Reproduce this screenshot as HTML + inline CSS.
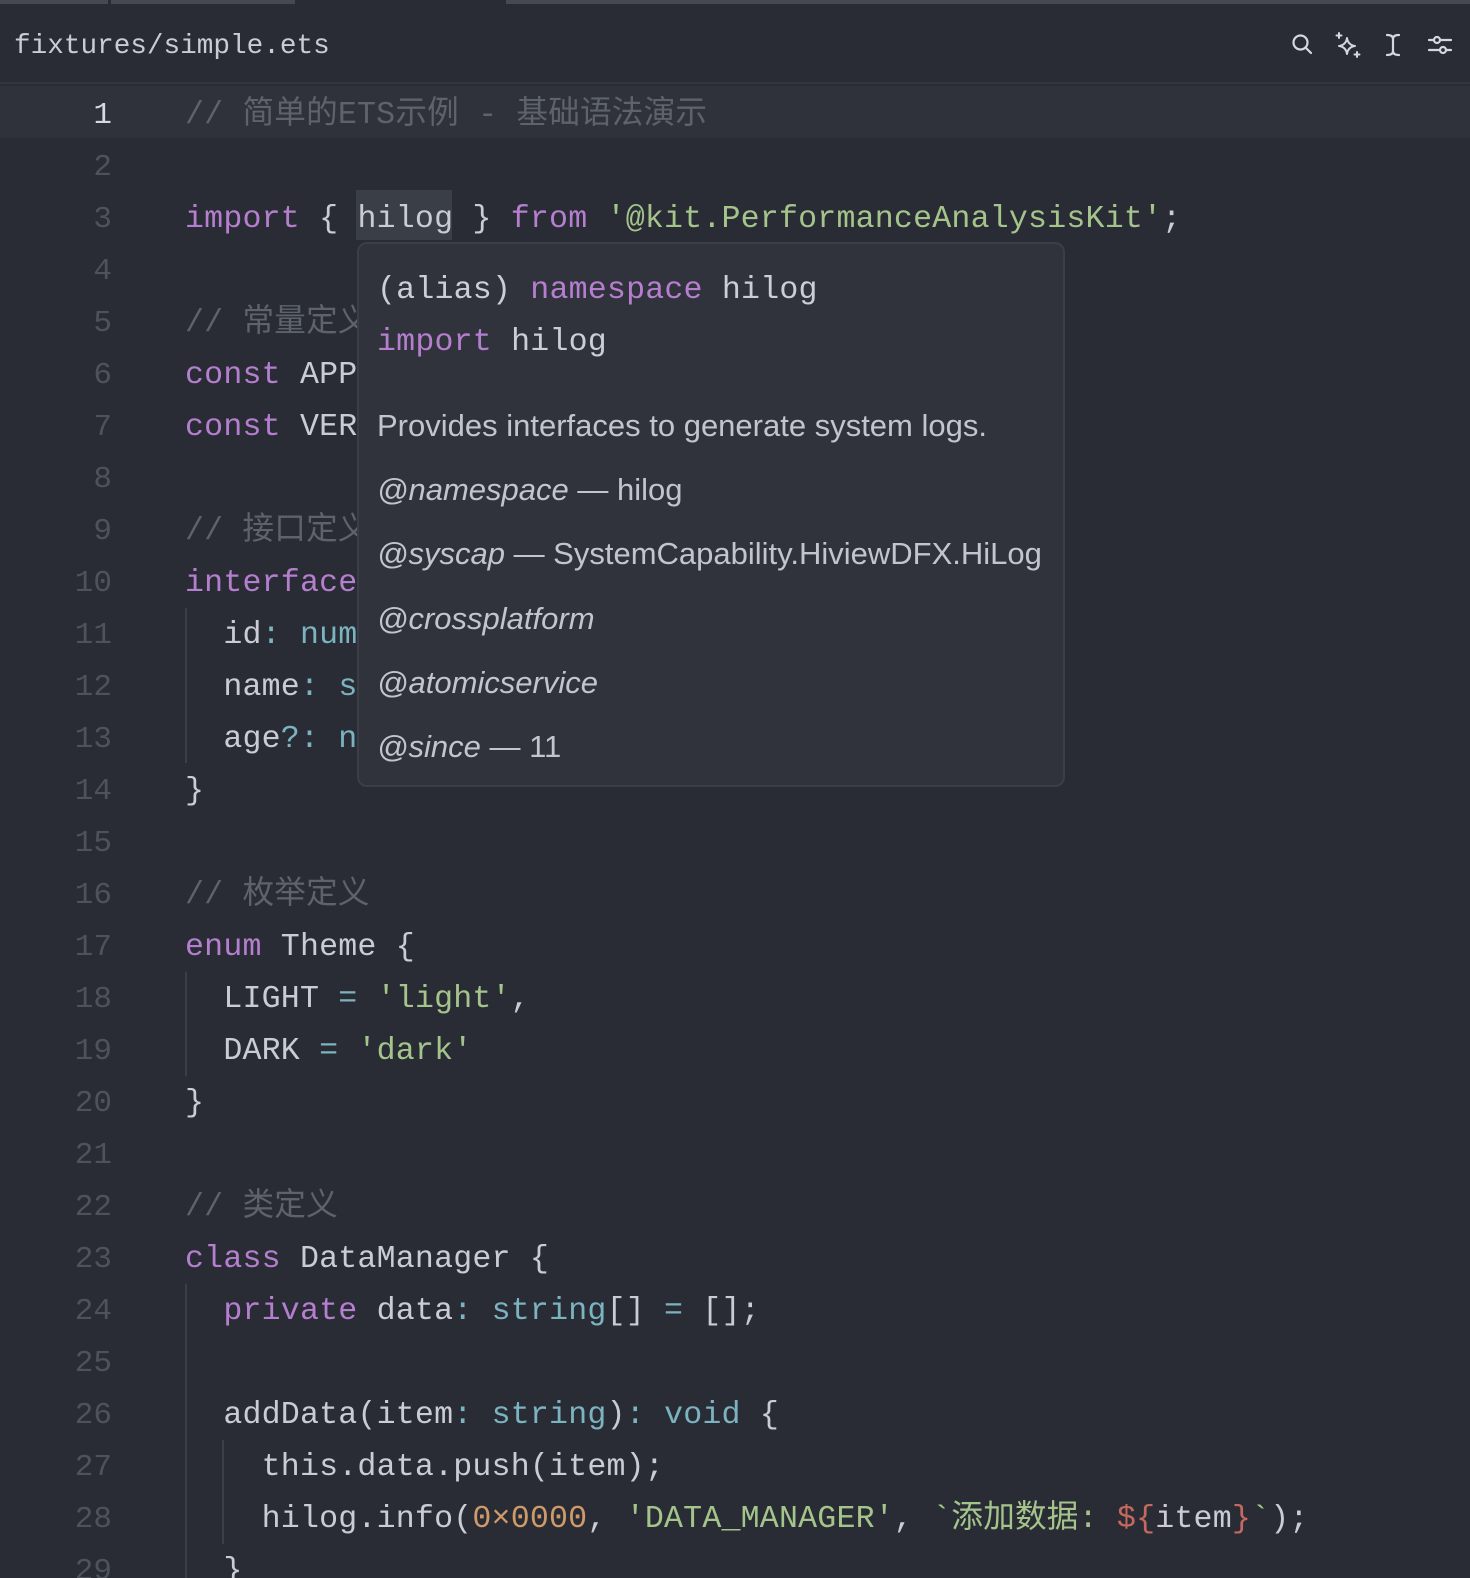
<!DOCTYPE html>
<html><head><meta charset="utf-8"><style>
*{margin:0;padding:0;box-sizing:border-box}
html,body{width:1470px;height:1578px;overflow:hidden;background:#292c34}
body{position:relative;font-family:"Liberation Mono","Noto Sans CJK SC",monospace;color:#c9ccd3}
.tabbar{position:absolute;top:0;left:0;width:1470px;height:4px;background:#292c34}
.tabbar i{position:absolute;top:0;height:4px;background:#454952}
.hdr{position:absolute;top:4px;left:0;width:1470px;height:80px;border-bottom:2px solid #31353d}
.path{position:absolute;left:14px;top:27px;font-size:27.7px;color:#c9ccd3}
.icons{position:absolute;top:28px;left:1284px}
.icons svg{position:absolute;top:0}
.cur{position:absolute;top:86px;left:0;width:1470px;height:52px;background:#2f323a}
.ln{position:absolute;left:0;width:112px;text-align:right;font-size:31px;color:#4d525c;line-height:52px;height:52px;margin-top:4px}
.ln.a{color:#d6d9df}
.code{position:absolute;left:185px;font-size:31.6px;line-height:52px;height:52px;white-space:pre;letter-spacing:0.2px;margin-top:4px}
.k{color:#b57ecf}.s{color:#a5c48c}.t{color:#7cb3c0}.c{color:#5d626c}.n{color:#cf9a6a}.r{color:#c46860}
.guide{position:absolute;width:2px;background:#3b3f47}
.hl{position:absolute;left:356px;top:190px;width:96px;height:50px;background:#3a3e47}
.tip{position:absolute;left:357px;top:242px;width:708px;height:545px;background:#30333c;border:2px solid #3a3e47;border-radius:10px}
.tip .m{position:absolute;left:18px;font-size:31.6px;letter-spacing:0.2px;white-space:pre;color:#cbced5}
.tip .p{position:absolute;left:18px;font-family:"Liberation Sans",sans-serif;font-size:31px;color:#c2c5cc;letter-spacing:0;white-space:nowrap}
.tip .p em{font-style:italic}
</style></head><body>
<div class="tabbar"><i style="left:0;width:108px"></i><i style="left:111px;width:184px"></i><i style="left:506px;width:964px"></i></div>
<div class="hdr">
<div class="path">fixtures/simple.ets</div>
<div class="icons">
<svg style="left:6px" width="24" height="24" viewBox="0 0 24 24" fill="none" stroke="#d4d7dd" stroke-width="2.2" stroke-linecap="round"><circle cx="10.5" cy="10.5" r="7"/><path d="M15.5 15.5 L21 21"/></svg>
<svg style="left:51px" width="28" height="28" viewBox="0 0 28 28" fill="none" stroke="#d4d7dd" stroke-width="2" stroke-linejoin="round" stroke-linecap="round"><path d="M12 6 Q13 13 20 14 Q13 15 12 22 Q11 15 4 14 Q11 13 12 6Z"/><path d="M4 1v5M1.5 3.5h5M22 20v5M19.5 22.5h5"/></svg>
<svg style="left:99px" width="20" height="26" viewBox="0 0 20 26" fill="none" stroke="#d4d7dd" stroke-width="2.2" stroke-linecap="round"><path d="M4 3 Q10 3 10 7 Q10 3 16 3M10 7V19M4 23 Q10 23 10 19 Q10 23 16 23"/></svg>
<svg style="left:143px" width="26" height="26" viewBox="0 0 26 26" fill="none" stroke="#d4d7dd" stroke-width="2.2" stroke-linecap="round"><path d="M2 8h5M13 8h11M2 18h11M19 18h5"/><circle cx="10" cy="8" r="3"/><circle cx="16" cy="18" r="3"/></svg>
</div>
</div>
<div class="cur"></div>
<div class="hl"></div>
<div class="guide" style="left:185px;top:608px;height:155px"></div>
<div class="guide" style="left:185px;top:972px;height:104px"></div>
<div class="guide" style="left:185px;top:1284px;height:294px"></div>
<div class="guide" style="left:222px;top:1440px;height:104px"></div>

<div class="ln a" style="top:86px">1</div>
<div class="ln" style="top:138px">2</div>
<div class="ln" style="top:190px">3</div>
<div class="ln" style="top:242px">4</div>
<div class="ln" style="top:294px">5</div>
<div class="ln" style="top:346px">6</div>
<div class="ln" style="top:398px">7</div>
<div class="ln" style="top:450px">8</div>
<div class="ln" style="top:502px">9</div>
<div class="ln" style="top:554px">10</div>
<div class="ln" style="top:606px">11</div>
<div class="ln" style="top:658px">12</div>
<div class="ln" style="top:710px">13</div>
<div class="ln" style="top:762px">14</div>
<div class="ln" style="top:814px">15</div>
<div class="ln" style="top:866px">16</div>
<div class="ln" style="top:918px">17</div>
<div class="ln" style="top:970px">18</div>
<div class="ln" style="top:1022px">19</div>
<div class="ln" style="top:1074px">20</div>
<div class="ln" style="top:1126px">21</div>
<div class="ln" style="top:1178px">22</div>
<div class="ln" style="top:1230px">23</div>
<div class="ln" style="top:1282px">24</div>
<div class="ln" style="top:1334px">25</div>
<div class="ln" style="top:1386px">26</div>
<div class="ln" style="top:1438px">27</div>
<div class="ln" style="top:1490px">28</div>
<div class="ln" style="top:1542px">29</div>

<div class="code" style="top:86px"><span class="c">// 简单的ETS示例 - 基础语法演示</span></div>
<div class="code" style="top:190px"><span class="k">import</span> { hilog } <span class="k">from</span> <span class="s">'@kit.PerformanceAnalysisKit'</span>;</div>
<div class="code" style="top:294px"><span class="c">// 常量定义</span></div>
<div class="code" style="top:346px"><span class="k">const</span> APP_NAME<span class="t">:</span> <span class="t">string</span> <span class="t">=</span> <span class="s">'SimpleApp'</span>;</div>
<div class="code" style="top:398px"><span class="k">const</span> VERSION<span class="t">:</span> <span class="t">number</span> <span class="t">=</span> <span class="n">1.0</span>;</div>
<div class="code" style="top:502px"><span class="c">// 接口定义</span></div>
<div class="code" style="top:554px"><span class="k">interface</span> User {</div>
<div class="code" style="top:606px">  id<span class="t">:</span> <span class="t">number</span>;</div>
<div class="code" style="top:658px">  name<span class="t">:</span> <span class="t">string</span>;</div>
<div class="code" style="top:710px">  age<span class="t">?:</span> <span class="t">number</span>;</div>
<div class="code" style="top:762px">}</div>
<div class="code" style="top:866px"><span class="c">// 枚举定义</span></div>
<div class="code" style="top:918px"><span class="k">enum</span> Theme {</div>
<div class="code" style="top:970px">  LIGHT <span class="t">=</span> <span class="s">'light'</span>,</div>
<div class="code" style="top:1022px">  DARK <span class="t">=</span> <span class="s">'dark'</span></div>
<div class="code" style="top:1074px">}</div>
<div class="code" style="top:1178px"><span class="c">// 类定义</span></div>
<div class="code" style="top:1230px"><span class="k">class</span> DataManager {</div>
<div class="code" style="top:1282px">  <span class="k">private</span> data<span class="t">:</span> <span class="t">string</span>[] <span class="t">=</span> [];</div>
<div class="code" style="top:1386px">  addData(item<span class="t">:</span> <span class="t">string</span>)<span class="t">:</span> <span class="t">void</span> {</div>
<div class="code" style="top:1438px">    this.data.push(item);</div>
<div class="code" style="top:1490px">    hilog.info(<span class="n">0×0000</span>, <span class="s">'DATA_MANAGER'</span>, <span class="s">`添加数据: </span><span class="r">${</span>item<span class="r">}</span><span class="s">`</span>);</div>
<div class="code" style="top:1542px">  }</div>

<div class="tip">
<div class="m" style="top:29px">(alias) <span class="k">namespace</span> hilog</div>
<div class="m" style="top:81px"><span class="k">import</span> hilog</div>
<div class="p" style="top:164px">Provides interfaces to generate system logs.</div>
<div class="p" style="top:228px"><em>@namespace</em> — hilog</div>
<div class="p" style="top:292px"><em>@syscap</em> — SystemCapability.HiviewDFX.HiLog</div>
<div class="p" style="top:357px"><em>@crossplatform</em></div>
<div class="p" style="top:421px"><em>@atomicservice</em></div>
<div class="p" style="top:485px"><em>@since</em> — 11</div>
</div>
</body></html>
